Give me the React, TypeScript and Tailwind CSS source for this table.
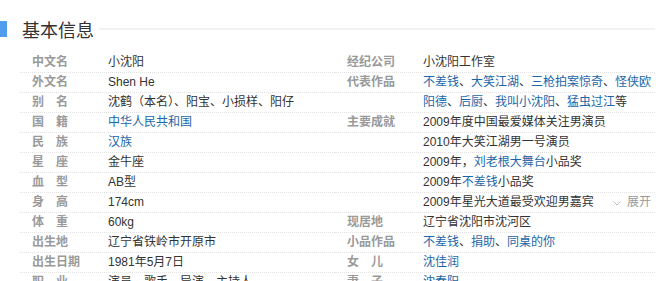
import React from "react";

type Seg = { t: string; link?: boolean };
type Line = { label?: string; segs: Seg[]; extra?: React.ReactNode };

const L = (t: string): Seg => ({ t, link: true });
const T = (t: string): Seg => ({ t });

const left: Line[] = [
  { label: "中文名", segs: [T("小沈阳")] },
  { label: "外文名", segs: [T("Shen He")] },
  { label: "别　名", segs: [T("沈鹤（本名）、阳宝、小损样、阳仔")] },
  { label: "国　籍", segs: [L("中华人民共和国")] },
  { label: "民　族", segs: [L("汉族")] },
  { label: "星　座", segs: [T("金牛座")] },
  { label: "血　型", segs: [T("AB型")] },
  { label: "身　高", segs: [T("174cm")] },
  { label: "体　重", segs: [T("60kg")] },
  { label: "出生地", segs: [T("辽宁省铁岭市开原市")] },
  { label: "出生日期", segs: [T("1981年5月7日")] },
  { label: "职　业", segs: [T("演员、歌手、导演、主持人")] },
];

const Expand = () => (
  <span className="ml-auto mr-[4px] flex items-center text-[#999]">
    <svg width="8" height="5" viewBox="0 0 8 5" className="mr-[6px] mt-[2px]">
      <path d="M0.5 0.5 L4 4 L7.5 0.5" fill="none" stroke="#bbb" strokeWidth="1" />
    </svg>
    展开
  </span>
);

const right: Line[] = [
  { label: "经纪公司", segs: [T("小沈阳工作室")] },
  {
    label: "代表作品",
    segs: [L("不差钱"), T("、"), L("大笑江湖"), T("、"), L("三枪拍案惊奇"), T("、"), L("怪侠欧")],
  },
  { segs: [L("阳德"), T("、"), L("后厨"), T("、"), L("我叫小沈阳"), T("、"), L("猛虫过江"), T("等")] },
  { label: "主要成就", segs: [T("2009年度中国最爱媒体关注男演员")] },
  { segs: [T("2010年大笑江湖男一号演员")] },
  { segs: [T("2009年，"), L("刘老根大舞台"), T("小品奖")] },
  { segs: [T("2009年"), L("不差钱"), T("小品奖")] },
  { segs: [T("2009年星光大道最受欢迎男嘉宾")], extra: <Expand /> },
  { label: "现居地", segs: [T("辽宁省沈阳市沈河区")] },
  { label: "小品作品", segs: [L("不差钱"), T("、"), L("捐助"), T("、"), L("同桌的你")] },
  { label: "女　儿", segs: [L("沈佳润")] },
  { label: "妻　子", segs: [L("沈春阳")] },
];

function Row({ line }: { line: Line }) {
  return (
    <div className="flex h-5 shrink-0 items-center border-b border-dotted border-[#e2e2e2] leading-[19px] whitespace-nowrap">
      <div className="w-[88px] shrink-0 pl-[12px] font-bold text-[#9a9a9a]">{line.label ?? ""}</div>
      <div className="text-[#333]">
        {line.segs.map((s, i) =>
          s.link ? (
            <span key={i} className="text-[#1b66a8]">
              {s.t}
            </span>
          ) : (
            <span key={i}>{s.t}</span>
          )
        )}
      </div>
      {line.extra}
    </div>
  );
}

export default function App() {
  return (
    <div
      className="relative h-[281px] w-[667px] overflow-hidden bg-white text-[12px]"
      style={{ fontFamily: '"Liberation Sans", Arial, "Noto Sans CJK SC", sans-serif' }}
    >
      <div className="mt-[19px] flex h-5 items-center">
        <div className="h-[16px] w-[7px] bg-[#4f9cee]" />
        <div className="ml-[15px] text-[18px] leading-5 text-[#333]" style={{ fontFamily: '"Noto Sans CJK SC", sans-serif' }}>
          基本信息
        </div>
        <div className="ml-[5px] mr-[12px] h-[2px] flex-1 bg-[#f2f2f2]" />
      </div>
      <div className="mt-[14px] ml-[20px] flex">
        <div className="flex w-[315px] flex-col">
          {left.map((l, i) => (
            <Row key={i} line={l} />
          ))}
        </div>
        <div className="flex w-[320px] flex-col">
          {right.map((l, i) => (
            <Row key={i} line={l} />
          ))}
        </div>
      </div>
    </div>
  );
}
